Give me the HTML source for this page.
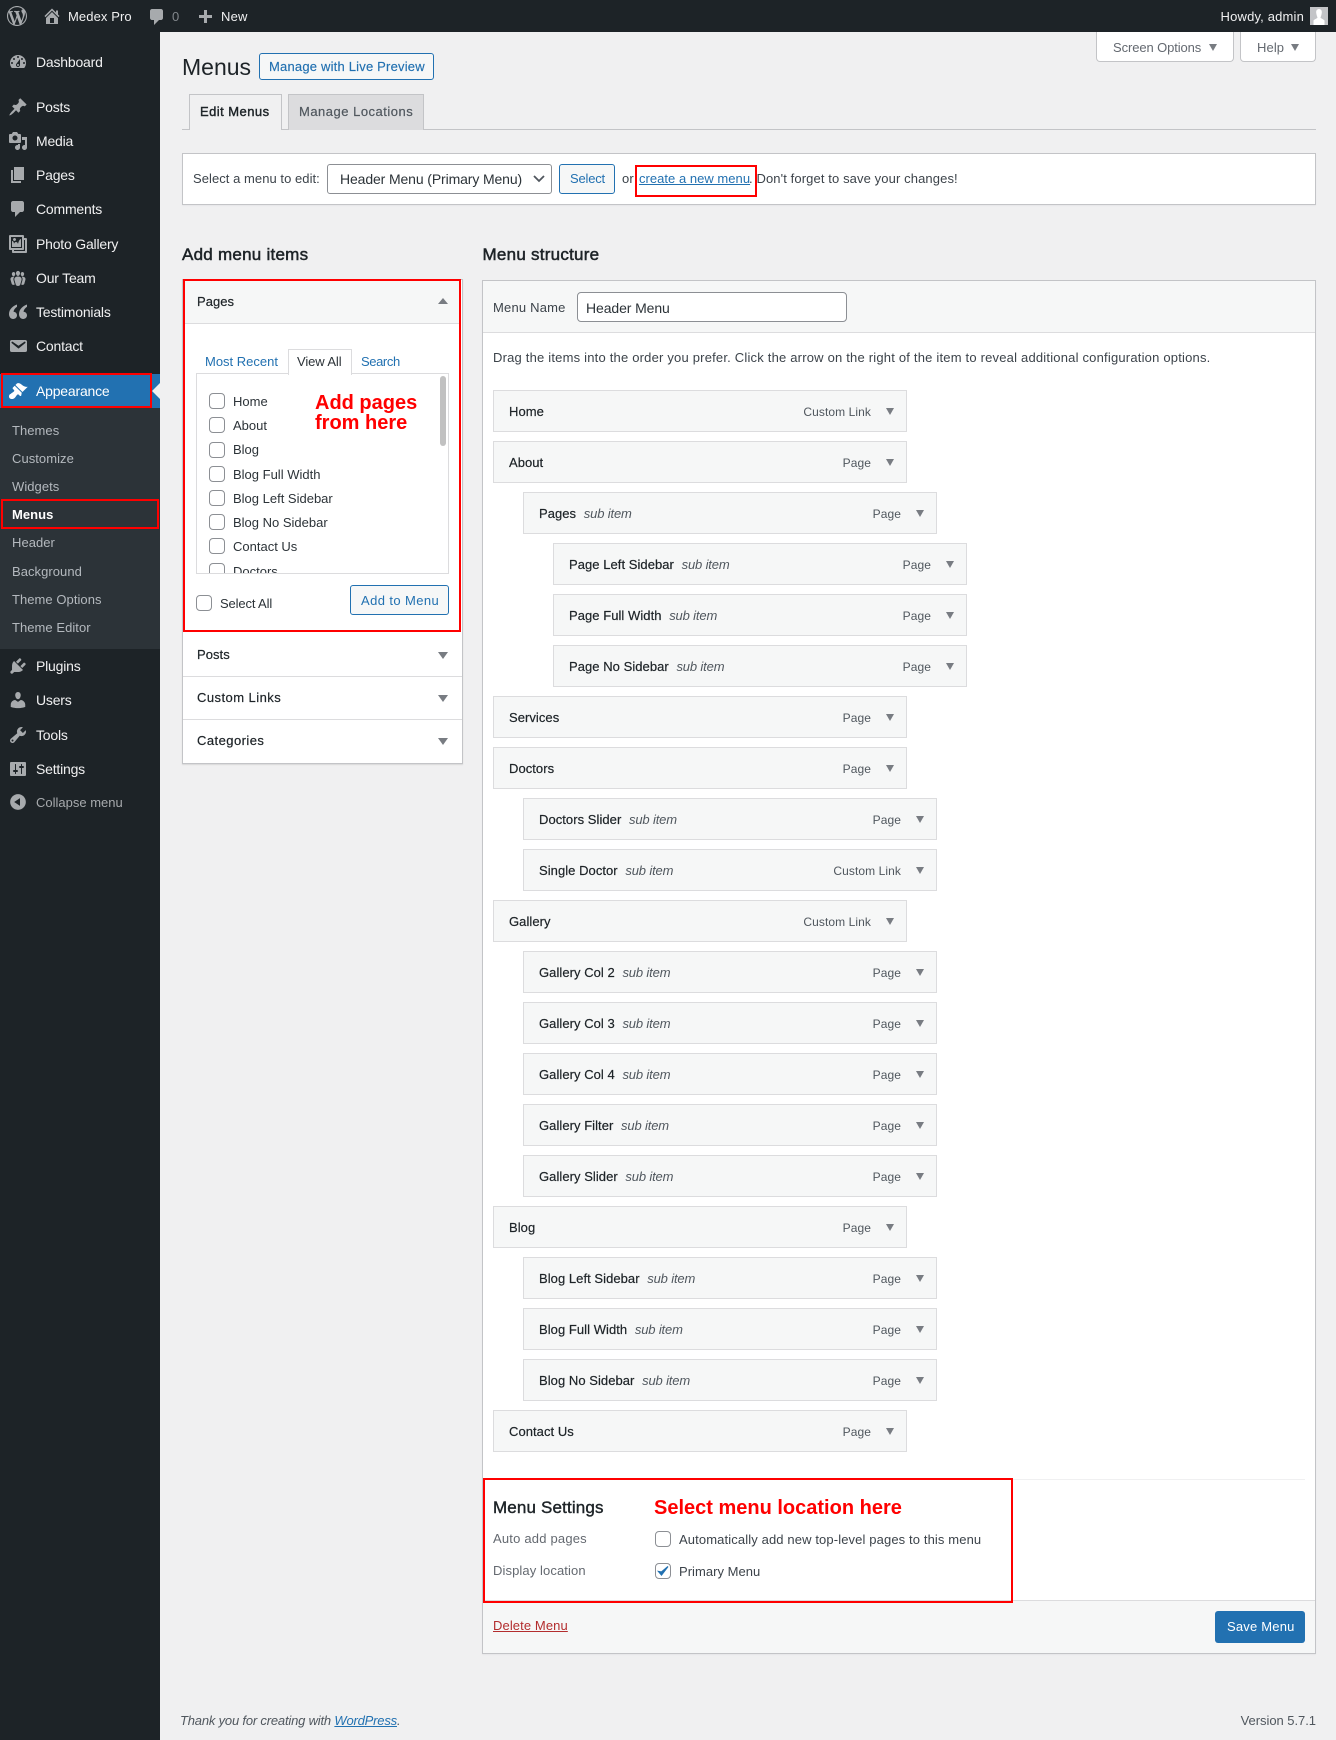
<!DOCTYPE html>
<html lang="en"><head><meta charset="utf-8"><title>Menus</title>
<style>
*{box-sizing:border-box}
html,body{margin:0;padding:0}
body{width:1336px;height:1740px;position:relative;overflow:hidden;background:#f0f0f1;font:13px/20px "Liberation Sans",sans-serif;color:#3c434a;letter-spacing:.2px}
.a{position:absolute}
.t{position:absolute;white-space:nowrap;line-height:20px}
.bx{position:absolute;box-sizing:border-box}
.red{position:absolute;border:2px solid #f00;pointer-events:none;z-index:5}
.ic{position:absolute;width:20px;height:20px;fill:#a7aaad}
.m{position:absolute;left:36px;color:#f0f0f1;font-size:14px;white-space:nowrap;line-height:20px;letter-spacing:-.2px}
.s{position:absolute;left:12px;color:#b4b9be;font-size:13px;white-space:nowrap;line-height:20px;letter-spacing:.05px}
.cb{position:absolute;width:16px;height:16px;border:1px solid #8c8f94;border-radius:4px;background:#fff}
.it{position:absolute;width:414px;height:42px;background:#f6f7f7;border:1px solid #dcdcde;color:#1d2327;padding:11px 0 0 15px;white-space:nowrap;letter-spacing:.05px;-webkit-text-stroke:.2px #1d2327}
.it i{color:#50575e;margin-left:4px;-webkit-text-stroke:0;letter-spacing:-.15px}
.it b{position:absolute;right:35px;top:11px;font-weight:400;font-size:12px;color:#50575e;-webkit-text-stroke:0;letter-spacing:.08px}
.it u{position:absolute;right:12px;top:17px;width:0;height:0;border-left:4.5px solid transparent;border-right:4.5px solid transparent;border-top:7px solid #787c82}
.d0{left:493px}.d1{left:523px}.d2{left:553px}
.dn{position:absolute;width:0;height:0;border-left:5px solid transparent;border-right:5px solid transparent;border-top:7px solid #787c82}
.lb{position:absolute;font-size:13px;white-space:nowrap;line-height:20px;color:#2c3338;letter-spacing:0}
a{color:#2271b1}
</style></head><body>

<!-- admin bar -->
<div class="bx" style="left:0;top:0;width:1336px;height:32px;background:#1d2327"></div>
<svg class="ic" style="left:7px;top:6px" viewBox="0 0 20 20"><path d="M20 10c0-5.51-4.49-10-10-10C4.48 0 0 4.49 0 10c0 5.52 4.48 10 10 10 5.51 0 10-4.48 10-10zM7.78 15.37L4.37 6.22c.55-.02 1.17-.08 1.17-.08.5-.06.44-1.13-.06-1.11 0 0-1.45.11-2.37.11-.18 0-.37 0-.58-.01C4.12 2.69 6.87 1.11 10 1.11c2.33 0 4.45.87 6.05 2.34-.68-.11-1.65.39-1.65 1.58 0 .74.45 1.36.9 2.1.35.61.55 1.36.55 2.46 0 1.49-1.4 5-1.4 5l-3.03-8.37c.54-.02.82-.17.82-.17.5-.05.44-1.25-.06-1.22 0 0-1.44.12-2.38.12-.87 0-2.33-.12-2.33-.12-.5-.03-.56 1.2-.06 1.22l.92.08 1.26 3.41zM17.41 10c.24-.64.74-1.87.43-4.25.7 1.29 1.05 2.71 1.05 4.25 0 3.29-1.73 6.24-4.4 7.78.97-2.59 1.94-5.2 2.92-7.78zM6.1 18.09C3.12 16.65 1.11 13.53 1.11 10c0-1.3.23-2.48.72-3.59C3.25 10.3 4.67 14.2 6.1 18.09zm4.03-6.63l2.58 6.98c-.86.29-1.76.45-2.71.45-.79 0-1.57-.11-2.29-.33.81-2.38 1.62-4.74 2.42-7.1z"/></svg>
<svg class="ic" style="left:42px;top:6px" viewBox="0 0 20 20"><path d="M16 8.5l1.53 1.53-1.06 1.06L10 4.62l-6.47 6.47-1.06-1.06L10 2.5l4 4v-2h2v4zm-6-2.46l6 5.99V18H4v-5.97zM12 17v-5H8v5h4z"/></svg>
<div class="t" style="left:68px;top:7px;color:#f0f0f1;font-size:13px;letter-spacing:.1px">Medex Pro</div>
<svg class="ic" style="left:147px;top:7px" viewBox="0 0 20 20"><path d="M5 2h9c1.100 0 2 .9 2 2v7c0 1.100-.9 2-2 2h-2l-5 5v-5H5c-1.100 0-2-.9-2-2V4c0-1.100.9-2 2-2z"/></svg>
<div class="t" style="left:172px;top:7px;color:#82878c">0</div>
<svg class="ic" style="left:195px;top:8px" viewBox="0 0 20 20"><path d="M17 7v3h-5v5H9v-5H4V7h5V2h3v5h5z"/></svg>
<div class="t" style="left:221px;top:7px;color:#f0f0f1;letter-spacing:.2px">New</div>
<div class="t" style="right:32px;top:7px;color:#f0f0f1;letter-spacing:.17px">Howdy, admin</div>
<div class="bx" style="left:1310px;top:7px;width:18px;height:18px;background:#c3c4c7"><svg style="position:absolute;left:0;top:0" width="18" height="18" viewBox="0 0 18 18"><path fill="#fff" d="M9 2c2.200 0 3 1.900 2.800 3.800C11.600 8 10.800 9.700 10.500 10.500c.2 1 3 1.600 4 3V18H3.500v-4.500c1-1.400 3.800-2 4-3C7.200 9.700 6.400 8 6.200 5.800 6 3.900 6.800 2 9 2z"/></svg></div>

<!-- sidebar -->
<div class="bx" style="left:0;top:32px;width:160px;height:1708px;background:#1d2327"></div>
<div class="bx" style="left:0;top:374px;width:160px;height:34px;background:#2271b1"></div>
<div class="a" style="left:152px;top:383px;width:0;height:0;border-top:8px solid transparent;border-bottom:8px solid transparent;border-right:8px solid #f0f0f1"></div>
<div class="bx" style="left:0;top:408px;width:160px;height:241px;background:#2c3338"></div>

<svg class="ic" style="left:8px;top:52px" viewBox="0 0 20 20"><path d="M3.760 16h12.480c1.100-1.370 1.760-3.110 1.760-5 0-4.420-3.580-8-8-8s-8 3.580-8 8c0 1.890.66 3.630 1.760 5zM10 4c.55 0 1 .45 1 1s-.45 1-1 1-1-.45-1-1 .45-1 1-1zM6 6c.55 0 1 .45 1 1s-.45 1-1 1-1-.45-1-1 .45-1 1-1zm8 0c.55 0 1 .45 1 1s-.45 1-1 1-1-.45-1-1 .45-1 1-1zm-5.370 5.550L12 7v6c0 1.100-.9 2-2 2s-2-.9-2-2c0-.57.24-1.080.63-1.450zM4 10c.55 0 1 .45 1 1s-.45 1-1 1-1-.45-1-1 .45-1 1-1zm12 0c.55 0 1 .45 1 1s-.45 1-1 1-1-.45-1-1 .45-1 1-1zm-5 3c0-.55-.45-1-1-1s-1 .45-1 1 .45 1 1 1 1-.45 1-1z"/></svg>
<div class="m" style="top:52px">Dashboard</div>
<svg class="ic" style="left:8px;top:97px" viewBox="0 0 20 20"><path d="M10.440 3.020l1.820-1.820 6.360 6.350-1.830 1.820c-1.050-.68-2.480-.57-3.410.36l-.75.75c-.92.93-1.040 2.350-.35 3.410l-1.830 1.820-2.410-2.410-2.800 2.790c-.42.42-3.380 2.710-3.800 2.290s1.860-3.390 2.280-3.810l2.790-2.790L4.100 9.360l1.830-1.820c1.050.69 2.480.57 3.400-.36l.75-.75c.93-.92 1.050-2.350.36-3.410z"/></svg>
<div class="m" style="top:97px">Posts</div>
<svg class="ic" style="left:8px;top:131px" viewBox="0 0 20 20"><path d="M13 11V4c0-.55-.45-1-1-1h-1.670L9 1H5L3.670 3H2c-.55 0-1 .45-1 1v7c0 .55.45 1 1 1h10c.55 0 1-.45 1-1zM7 4.500c1.380 0 2.500 1.120 2.500 2.500S8.380 9.500 7 9.500 4.500 8.380 4.500 7 5.620 4.500 7 4.500zM14 6h5v10.500c0 1.380-1.120 2.500-2.500 2.500S14 17.880 14 16.500s1.120-2.500 2.500-2.500c.17 0 .34.02.5.05V9h-3V6zm-4 8.050V13h2v3.500c0 1.380-1.120 2.500-2.500 2.500S7 17.880 7 16.500 8.120 14 9.500 14c.17 0 .34.02.5.05z"/></svg>
<div class="m" style="top:131px">Media</div>
<svg class="ic" style="left:8px;top:165px" viewBox="0 0 20 20"><path d="M6 15V2h10v13H6zm-1 1h8v2H3V5h2v11z"/></svg>
<div class="m" style="top:165px">Pages</div>
<svg class="ic" style="left:8px;top:199px" viewBox="0 0 20 20"><path d="M5 2h9c1.100 0 2 .9 2 2v7c0 1.100-.9 2-2 2h-2l-5 5v-5H5c-1.100 0-2-.9-2-2V4c0-1.100.9-2 2-2z"/></svg>
<div class="m" style="top:199px">Comments</div>
<svg class="ic" style="left:8px;top:234px" viewBox="0 0 20 20"><path d="M16 4h1.960c.57 0 1.040.47 1.040 1.040v12.920c0 .57-.47 1.040-1.040 1.040H5.040C4.470 19 4 18.530 4 17.960V16H2.040C1.470 16 1 15.530 1 14.960V2.040C1 1.470 1.470 1 2.040 1h12.920c.57 0 1.040.47 1.040 1.040V4zM3 14h11V3H3v11zm5-8.500C8 4.670 7.330 4 6.500 4S5 4.670 5 5.500 5.670 7 6.500 7 8 6.330 8 5.500zm2 4.500s1-5 3-5v8H4V7c2 0 2 3 2 3s.33-2 2-2 2 2 2 2zm7 7V6h-1v8.960c0 .57-.47 1.040-1.040 1.040H6v1h11z"/></svg>
<div class="m" style="top:234px">Photo Gallery</div>
<svg class="ic" style="left:8px;top:268px" viewBox="0 0 20 20"><path d="M8.030 4.460c-.29 1.280.55 3.460 1.970 3.460 1.410 0 2.250-2.180 1.960-3.460-.22-.98-1.080-1.630-1.960-1.630-.89 0-1.740.65-1.970 1.630zm-4.130.9c-.25 1.080.47 2.930 1.670 2.930s1.920-1.850 1.670-2.930c-.19-.83-.92-1.390-1.670-1.390s-1.480.56-1.670 1.390zm8.860 0c-.25 1.080.47 2.930 1.660 2.930 1.200 0 1.920-1.850 1.670-2.930-.19-.83-.92-1.390-1.670-1.390-.74 0-1.470.56-1.660 1.390zm-.59 11.430l1.250-4.300C14.200 10 12.710 8.470 10 8.470c-2.720 0-4.210 1.530-3.440 4.020l1.260 4.300C8.050 17.510 9 18 10 18c.98 0 1.940-.49 2.170-1.210zm-6.100-7.630c-.49.67-.96 1.830-.42 3.590l1.120 3.790c-.34.2-.77.31-1.200.31-.85 0-1.650-.41-1.850-1.030l-1.070-3.650c-.65-2.110.61-3.400 2.920-3.400.27 0 .54.02.79.06-.1.1-.2.22-.29.33zm8.350-.39c2.310 0 3.580 1.290 2.920 3.400l-1.070 3.650c-.2.62-1 1.030-1.850 1.030-.43 0-.86-.11-1.200-.31l1.110-3.770c.55-1.780.08-2.940-.42-3.610-.08-.11-.18-.23-.28-.33.25-.04.51-.06.79-.06z"/></svg>
<div class="m" style="top:268px">Our Team</div>
<svg class="ic" style="left:8px;top:302px" viewBox="0 0 20 20"><path d="M9 2.500C5 4 1 7 1 12c0 3 1.800 5 4.200 5 2.200 0 3.800-1.600 3.800-3.700 0-2-1.400-3.500-3.500-3.600.3-2 1.500-3.600 3.500-5zM19 2.500c-4 1.500-8 4.500-8 9.500 0 3 1.800 5 4.200 5 2.200 0 3.800-1.600 3.800-3.700 0-2-1.400-3.500-3.500-3.600.3-2 1.500-3.600 3.500-5z"/></svg>
<div class="m" style="top:302px">Testimonials</div>
<svg class="ic" style="left:8px;top:336px" viewBox="0 0 20 20"><path d="M3.870 4h13.250C18.370 4 19 4.590 19 5.790v8.420c0 1.190-.63 1.790-1.880 1.790H3.870c-1.250 0-1.880-.6-1.880-1.790V5.790c0-1.200.63-1.790 1.880-1.790zm6.620 8.600l6.740-5.530c.24-.2.43-.66.13-1.070-.29-.41-.82-.42-1.170-.17l-5.700 3.860L4.800 5.830c-.35-.25-.88-.24-1.170.17-.3.41-.11.87.13 1.070z"/></svg>
<div class="m" style="top:336px">Contact</div>
<svg class="ic" style="left:8px;top:381px;fill:#fff" viewBox="0 0 20 20"><path d="M14.480 11.060L7.410 3.990l1.500-1.500c.5-.56 2.300-.47 3.510.32 1.210.8 1.430 1.280 2.910 2.100 1.180.64 2.450 1.260 4.450.85zm-.71.71L6.700 4.700 4.930 6.470c-.39.39-.39 1.020 0 1.410l1.060 1.060c.39.39.39 1.030 0 1.420-.6.6-1.430 1.110-2.210 1.690-.35.26-.7.53-1.010.84C1.430 13.230 1 14.390 1 15.480c0 .98.46 1.610 1.010 2.030.56.39 1.140.53 1.920.53 1.030 0 2.110-.42 2.830-1.140.31-.31.58-.66.84-1.010.58-.78 1.090-1.610 1.690-2.210.39-.39 1.030-.39 1.420 0l1.060 1.060c.39.39 1.020.39 1.410 0z"/></svg>
<div class="m" style="top:381px;color:#fff">Appearance</div>
<div class="red" style="left:1px;top:373px;width:151px;height:35px"></div>
<div class="s" style="top:421px">Themes</div>
<div class="s" style="top:449px">Customize</div>
<div class="s" style="top:477px">Widgets</div>
<div class="s" style="top:505px;color:#fff;font-weight:700">Menus</div>
<div class="red" style="left:1px;top:499px;width:158px;height:30px"></div>
<div class="s" style="top:533px">Header</div>
<div class="s" style="top:562px">Background</div>
<div class="s" style="top:590px">Theme Options</div>
<div class="s" style="top:618px">Theme Editor</div>
<svg class="ic" style="left:8px;top:656px" viewBox="0 0 20 20"><path d="M13.110 4.360L9.870 7.600 8 5.730l3.240-3.240c.35-.34 1.050-.2 1.560.32.52.51.66 1.210.31 1.550zm-8 1.770l.91-1.120 9.010 9.010-1.190.84c-.71.71-2.630 1.160-3.820 1.160H6.140L4.900 17.260c-.59.59-1.540.59-2.120 0-.59-.58-.59-1.530 0-2.120l1.240-1.240v-3.880c0-1.130.4-3.190 1.090-3.890zm7.260 3.970l3.240-3.240c.34-.35 1.040-.21 1.550.31.52.51.66 1.210.31 1.550l-3.240 3.250z"/></svg>
<div class="m" style="top:656px">Plugins</div>
<svg class="ic" style="left:8px;top:690px" viewBox="0 0 20 20"><path d="M10 9.250c-2.270 0-2.730-3.440-2.730-3.440C7 4.020 7.820 2 9.970 2c2.160 0 2.980 2.020 2.710 3.810 0 0-.41 3.440-2.680 3.440zm0 2.570L12.720 10c2.390 0 4.520 2.330 4.520 4.530v2.490s-3.650 1.130-7.240 1.130c-3.650 0-7.240-1.130-7.240-1.130v-2.490c0-2.250 1.940-4.480 4.470-4.480z"/></svg>
<div class="m" style="top:690px">Users</div>
<svg class="ic" style="left:8px;top:725px" viewBox="0 0 20 20"><path d="M16.680 9.770c-1.340 1.340-3.300 1.670-4.950.99l-5.410 6.520c-.99.99-2.590.99-3.580 0s-.99-2.590 0-3.570l6.520-5.420c-.68-1.650-.35-3.610.99-4.950 1.280-1.280 3.120-1.620 4.720-1.060l-2.890 2.890 2.820 2.820 2.860-2.870c.53 1.580.18 3.390-1.080 4.650zM3.810 16.210c.4.39 1.040.39 1.430 0 .4-.4.4-1.040 0-1.430-.39-.4-1.030-.4-1.430 0-.39.39-.39 1.030 0 1.430z"/></svg>
<div class="m" style="top:725px">Tools</div>
<svg class="ic" style="left:8px;top:759px" viewBox="0 0 20 20"><path d="M18 16V4c0-.55-.45-1-1-1H3c-.55 0-1 .45-1 1v12c0 .55.45 1 1 1h14c.55 0 1-.45 1-1zM8 11h1c.55 0 1 .45 1 1s-.45 1-1 1H8v1.500c0 .28-.22.5-.5.5s-.5-.22-.5-.5V13H6c-.55 0-1-.45-1-1s.45-1 1-1h1V5.500c0-.28.22-.5.5-.5s.5.22.5.5V11zm5-2h-1c-.55 0-1-.45-1-1s.45-1 1-1h1V5.500c0-.28.22-.5.5-.5s.5.22.5.5V7h1c.55 0 1 .45 1 1s-.45 1-1 1h-1v5.500c0 .28-.22.5-.5.5s-.5-.22-.5-.5V9z"/></svg>
<div class="m" style="top:759px">Settings</div>
<svg class="ic" style="left:8px;top:792px" viewBox="0 0 20 20"><path d="M10 2.160c4.330 0 7.840 3.510 7.840 7.840s-3.510 7.840-7.840 7.840S2.160 14.330 2.160 10 5.710 2.160 10 2.160zm2 11.720V6.120L6.180 9.970z"/></svg>
<div class="s" style="top:793px;left:36px;color:#a7aaad;letter-spacing:0">Collapse menu</div>

<!-- screen tabs -->
<div class="bx" style="left:1096px;top:32px;width:138px;height:30px;background:#fff;border:1px solid #c3c4c7;border-top:0;border-radius:0 0 4px 4px"></div>
<div class="t" style="left:1113px;top:38px;color:#646970;letter-spacing:-.1px">Screen Options</div>
<div class="a" style="left:1209px;top:44px;width:0;height:0;border-left:4px solid transparent;border-right:4px solid transparent;border-top:7px solid #787c82"></div>
<div class="bx" style="left:1240px;top:32px;width:76px;height:30px;background:#fff;border:1px solid #c3c4c7;border-top:0;border-radius:0 0 4px 4px"></div>
<div class="t" style="left:1257px;top:38px;color:#646970;letter-spacing:.1px">Help</div>
<div class="a" style="left:1291px;top:44px;width:0;height:0;border-left:4px solid transparent;border-right:4px solid transparent;border-top:7px solid #787c82"></div>

<!-- heading -->
<div class="t" style="left:182px;top:52px;font-size:23px;line-height:30px;color:#1d2327;letter-spacing:0">Menus</div>
<div class="bx" style="left:259px;top:53px;width:175px;height:27px;border:1px solid #2271b1;border-radius:3px;background:#f6f7f7"></div>
<div class="t" style="left:269px;top:57px;color:#2271b1;letter-spacing:.2px;-webkit-text-stroke:.15px #2271b1">Manage with Live Preview</div>

<!-- nav tabs -->
<div class="bx" style="left:182px;top:129px;width:1134px;height:1px;background:#c3c4c7"></div>
<div class="bx" style="left:189px;top:94px;width:93px;height:36px;background:#f0f0f1;border:1px solid #c3c4c7;border-bottom:0"></div>
<div class="t" style="left:200px;top:102px;color:#1d2327;font-weight:400;letter-spacing:.45px;-webkit-text-stroke:.4px #1d2327">Edit Menus</div>
<div class="bx" style="left:288px;top:94px;width:136px;height:36px;background:#dcdcde;border:1px solid #c3c4c7;border-bottom:0"></div>
<div class="t" style="left:299px;top:102px;color:#50575e;letter-spacing:.5px;-webkit-text-stroke:.2px #50575e">Manage Locations</div>

<!-- manage box -->
<div class="bx" style="left:182px;top:153px;width:1134px;height:52px;background:#fff;border:1px solid #c3c4c7;box-shadow:0 1px 1px rgba(0,0,0,.04)"></div>
<div class="t" style="left:193px;top:169px;color:#3c434a;letter-spacing:.05px">Select a menu to edit:</div>
<div class="bx" style="left:327px;top:164px;width:225px;height:30px;background:#fff;border:1px solid #8c8f94;border-radius:3px"></div>
<div class="t" style="left:340px;top:169px;font-size:14px;color:#2c3338;letter-spacing:-.12px">Header Menu (Primary Menu)</div>
<svg class="a" style="left:533px;top:174px" width="12" height="10" viewBox="0 0 12 10"><path d="M1 2l5 5 5-5" fill="none" stroke="#50575e" stroke-width="1.800"/></svg>
<div class="bx" style="left:559px;top:164px;width:56px;height:30px;background:#f6f7f7;border:1px solid #2271b1;border-radius:3px"></div>
<div class="t" style="left:570px;top:169px;color:#2271b1;letter-spacing:-.2px">Select</div>
<div class="t" style="left:622px;top:169px;color:#3c434a">or</div>
<a class="t" href="#" style="left:639px;top:169px;letter-spacing:.03px">create a new menu</a>
<div class="t" style="left:749px;top:169px;color:#3c434a;letter-spacing:.11px">. Don't forget to save your changes!</div>
<div class="red" style="left:635px;top:165px;width:122px;height:32px"></div>

<!-- left column -->
<div class="t" style="left:182px;top:245px;font-size:17px;color:#1d2327;letter-spacing:.25px;-webkit-text-stroke:.5px #1d2327">Add menu items</div>
<div class="t" style="left:482.500px;top:245px;font-size:17px;color:#1d2327;letter-spacing:.25px;-webkit-text-stroke:.5px #1d2327">Menu structure</div>

<div class="bx" style="left:182px;top:279px;width:281px;height:485px;background:#fff;border:1px solid #c3c4c7;box-shadow:0 1px 1px rgba(0,0,0,.1)"></div>
<div class="bx" style="left:184px;top:281px;width:277px;height:43px;background:#f6f7f7;border-bottom:1px solid #dcdcde"></div>
<div class="t" style="left:197px;top:292px;color:#1d2327;letter-spacing:.05px;-webkit-text-stroke:.2px #1d2327">Pages</div>
<div class="a" style="left:438px;top:298px;width:0;height:0;border-left:5px solid transparent;border-right:5px solid transparent;border-bottom:6px solid #787c82"></div>

<div class="bx" style="left:196px;top:373px;width:253px;height:201px;border:1px solid #dcdcde;background:#fff"></div>
<div class="t" style="left:205px;top:352px;color:#2271b1;letter-spacing:0">Most Recent</div>
<div class="bx" style="left:288px;top:349px;width:64px;height:26px;background:#fff;border:1px solid #dcdcde;border-bottom:0"></div>
<div class="t" style="left:297px;top:352px;color:#2c3338;letter-spacing:-.1px">View All</div>
<div class="t" style="left:361px;top:352px;color:#2271b1;letter-spacing:-.4px">Search</div>
<div class="bx" style="left:440px;top:376px;width:6px;height:70px;background:#c1c1c1;border-radius:3px"></div>

<div class="cb" style="left:209px;top:393px"></div><div class="lb" style="left:233px;top:392px">Home</div>
<div class="cb" style="left:209px;top:417px"></div><div class="lb" style="left:233px;top:416px">About</div>
<div class="cb" style="left:209px;top:442px"></div><div class="lb" style="left:233px;top:440px">Blog</div>
<div class="cb" style="left:209px;top:466px"></div><div class="lb" style="left:233px;top:465px">Blog Full Width</div>
<div class="cb" style="left:209px;top:490px"></div><div class="lb" style="left:233px;top:489px">Blog Left Sidebar</div>
<div class="cb" style="left:209px;top:514px"></div><div class="lb" style="left:233px;top:513px">Blog No Sidebar</div>
<div class="cb" style="left:209px;top:538px"></div><div class="lb" style="left:233px;top:537px">Contact Us</div>
<div class="a" style="left:197px;top:560px;width:240px;height:13px;overflow:hidden"><div class="cb" style="left:12px;top:3px"></div><div class="lb" style="left:36px;top:2px">Doctors</div></div>

<div class="cb" style="left:196px;top:595px"></div><div class="lb" style="left:220px;top:594px;letter-spacing:-.14px">Select All</div>
<div class="bx" style="left:350px;top:585px;width:99px;height:30px;background:#f6f7f7;border:1px solid #2271b1;border-radius:3px"></div>
<div class="t" style="left:361px;top:591px;color:#2271b1;letter-spacing:.4px">Add to Menu</div>

<div class="bx" style="left:183px;top:676px;width:279px;height:1px;background:#dcdcde"></div>
<div class="bx" style="left:183px;top:719px;width:279px;height:1px;background:#dcdcde"></div>
<div class="t" style="left:197px;top:645px;color:#1d2327;letter-spacing:.05px;-webkit-text-stroke:.2px #1d2327">Posts</div>
<div class="t" style="left:197px;top:688px;color:#1d2327;letter-spacing:.45px;-webkit-text-stroke:.2px #1d2327">Custom Links</div>
<div class="t" style="left:197px;top:731px;color:#1d2327;letter-spacing:.45px;-webkit-text-stroke:.2px #1d2327">Categories</div>
<div class="dn" style="left:438px;top:652px"></div>
<div class="dn" style="left:438px;top:695px"></div>
<div class="dn" style="left:438px;top:738px"></div>

<div class="red" style="left:183px;top:279px;width:278px;height:353px"></div>
<div class="t" style="left:315px;top:393px;font-size:20px;line-height:20px;font-weight:700;color:#f00;letter-spacing:0">Add pages</div>
<div class="t" style="left:315px;top:413px;font-size:20px;line-height:20px;font-weight:700;color:#f00;letter-spacing:0">from here</div>

<!-- menu structure -->
<div class="bx" style="left:482px;top:280px;width:834px;height:1374px;background:#fff;border:1px solid #c3c4c7;box-shadow:0 1px 1px rgba(0,0,0,.04)"></div>
<div class="bx" style="left:483px;top:281px;width:832px;height:52px;background:#f6f7f7;border-bottom:1px solid #dcdcde"></div>
<div class="t" style="left:493px;top:298px;color:#3c434a;letter-spacing:.2px">Menu Name</div>
<div class="bx" style="left:577px;top:292px;width:270px;height:30px;background:#fff;border:1px solid #8c8f94;border-radius:4px"></div>
<div class="t" style="left:586px;top:298px;font-size:14px;color:#2c3338;letter-spacing:-.1px">Header Menu</div>
<div class="t" style="left:493px;top:348px;color:#3c434a;letter-spacing:.2px">Drag the items into the order you prefer. Click the arrow on the right of the item to reveal additional configuration options.</div>

<div class="it d0" style="top:390px">Home<b>Custom Link</b><u></u></div>
<div class="it d0" style="top:441px">About<b>Page</b><u></u></div>
<div class="it d1" style="top:492px">Pages <i>sub item</i><b>Page</b><u></u></div>
<div class="it d2" style="top:543px">Page Left Sidebar <i>sub item</i><b>Page</b><u></u></div>
<div class="it d2" style="top:594px">Page Full Width <i>sub item</i><b>Page</b><u></u></div>
<div class="it d2" style="top:645px">Page No Sidebar <i>sub item</i><b>Page</b><u></u></div>
<div class="it d0" style="top:696px">Services<b>Page</b><u></u></div>
<div class="it d0" style="top:747px">Doctors<b>Page</b><u></u></div>
<div class="it d1" style="top:798px">Doctors Slider <i>sub item</i><b>Page</b><u></u></div>
<div class="it d1" style="top:849px">Single Doctor <i>sub item</i><b>Custom Link</b><u></u></div>
<div class="it d0" style="top:900px">Gallery<b>Custom Link</b><u></u></div>
<div class="it d1" style="top:951px">Gallery Col 2 <i>sub item</i><b>Page</b><u></u></div>
<div class="it d1" style="top:1002px">Gallery Col 3 <i>sub item</i><b>Page</b><u></u></div>
<div class="it d1" style="top:1053px">Gallery Col 4 <i>sub item</i><b>Page</b><u></u></div>
<div class="it d1" style="top:1104px">Gallery Filter <i>sub item</i><b>Page</b><u></u></div>
<div class="it d1" style="top:1155px">Gallery Slider <i>sub item</i><b>Page</b><u></u></div>
<div class="it d0" style="top:1206px">Blog<b>Page</b><u></u></div>
<div class="it d1" style="top:1257px">Blog Left Sidebar <i>sub item</i><b>Page</b><u></u></div>
<div class="it d1" style="top:1308px">Blog Full Width <i>sub item</i><b>Page</b><u></u></div>
<div class="it d1" style="top:1359px">Blog No Sidebar <i>sub item</i><b>Page</b><u></u></div>
<div class="it d0" style="top:1410px">Contact Us<b>Page</b><u></u></div>

<!-- settings -->
<div class="bx" style="left:493px;top:1479px;width:812px;height:1px;background:#f0f0f1"></div>
<div class="t" style="left:493px;top:1498px;font-size:17px;color:#1d2327;letter-spacing:.15px;-webkit-text-stroke:.4px #1d2327">Menu Settings</div>
<div class="t" style="left:493px;top:1529px;color:#646970;letter-spacing:.2px">Auto add pages</div>
<div class="t" style="left:493px;top:1561px;color:#646970;letter-spacing:.1px">Display location</div>
<div class="cb" style="left:655px;top:1531px"></div>
<div class="t" style="left:679px;top:1530px;color:#3c434a;letter-spacing:.12px">Automatically add new top-level pages to this menu</div>
<div class="cb" style="left:655px;top:1563px"></div>
<svg class="a" style="left:656px;top:1564px" width="14" height="14" viewBox="0 0 14 14"><path d="M2.500 7.500L5.500 11 12 2.500 5.500 8z" fill="#2271b1" stroke="#2271b1" stroke-width="1.200"/></svg>
<div class="t" style="left:679px;top:1562px;color:#3c434a;letter-spacing:.03px">Primary Menu</div>
<div class="t" style="left:654px;top:1498px;font-size:20px;font-weight:700;color:#f00;letter-spacing:0">Select menu location here</div>

<div class="bx" style="left:483px;top:1600px;width:832px;height:53px;background:#f6f7f7;border-top:1px solid #dcdcde"></div>
<a class="t" href="#" style="left:493px;top:1616px;color:#b32d2e;letter-spacing:.1px">Delete Menu</a>
<div class="bx" style="left:1215px;top:1611px;width:90px;height:32px;background:#2271b1;border-radius:3px"></div>
<div class="t" style="left:1227px;top:1617px;color:#fff;letter-spacing:.2px">Save Menu</div>
<div class="red" style="left:483px;top:1478px;width:530px;height:125px"></div>

<!-- footer -->
<div class="t" style="left:180px;top:1711px;color:#50575e;font-style:italic;letter-spacing:-.19px">Thank you for creating with <a href="#">WordPress</a>.</div>
<div class="t" style="right:20px;top:1711px;color:#50575e;letter-spacing:-.04px">Version 5.7.1</div>
</body></html>
